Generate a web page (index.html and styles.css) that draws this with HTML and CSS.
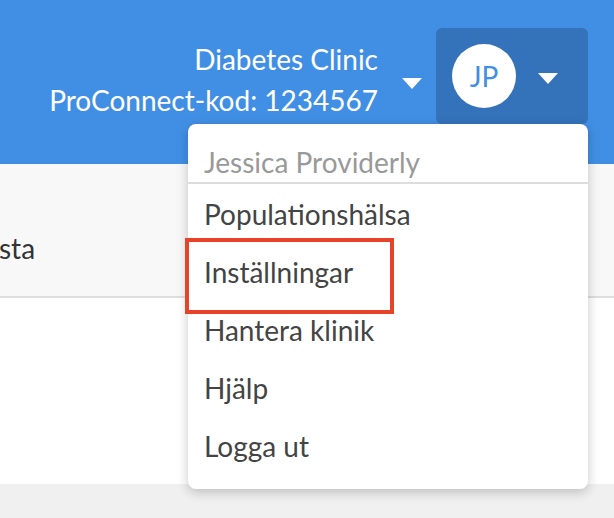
FILE: index.html
```html
<!DOCTYPE html>
<html lang="sv">
<head>
    <meta charset="UTF-8">
    <meta name="viewport" content="width=device-width, initial-scale=1.0">
    <title>ProConnect</title>
    <link rel="stylesheet" href="styles.css">
</head>
<body>

    <header class="topbar">
        <div class="clinic">
            <div class="clinic-text">
                <div>Diabetes Clinic</div>
                <div>ProConnect-kod: 1234567</div>
            </div>
            <span class="caret"></span>
        </div>
        <div class="user-button">
            <div class="avatar">JP</div>
            <span class="caret"></span>
        </div>
    </header>

    <div class="tabs">
        <span class="tab">sta</span>
    </div>
    <div class="content"></div>
    <div class="footer"></div>

    <div class="user-menu">
        <div class="user-name">Jessica Providerly</div>
        <ul class="menu-list">
            <li>Populationshälsa</li>
            <li class="highlighted">Inställningar</li>
            <li>Hantera klinik</li>
            <li>Hjälp</li>
            <li>Logga ut</li>
        </ul>
    </div>

</body>
</html>
```

FILE: styles.css
```css
body {
    margin: 0;
    font-family: 'Lato', 'Open Sans', sans-serif;
    background-color: #f0f0f0;
    color: #444;
    width: 614px;
    height: 518px;
    overflow: hidden;
    position: relative;
}
.topbar {
    height: 164px;
    box-sizing: border-box;
    background-color: #418fe5;
    display: flex;
    justify-content: flex-end;
    align-items: flex-start;
    padding: 28px 26px 0 0;
}
.clinic {
    display: flex;
    align-items: flex-start;
    color: white;
    font-size: 28px;
}
.clinic-text {
    text-align: right;
    line-height: 41px;
    padding-top: 11px;
}
.caret {
    width: 0;
    height: 0;
    border-left: 10px solid transparent;
    border-right: 10px solid transparent;
    border-top: 11px solid white;
}
.clinic .caret {
    margin: 50px 14px 0 24px;
}
.user-button {
    width: 152px;
    height: 96px;
    box-sizing: border-box;
    background-color: #3473ba;
    border-radius: 6px;
    display: flex;
    align-items: center;
    padding-left: 16px;
}
.avatar {
    width: 64px;
    height: 64px;
    border-radius: 50%;
    background: white;
    color: #418fe5;
    font-size: 28px;
    display: flex;
    align-items: center;
    justify-content: center;
}
.user-button .caret {
    margin: 4px 0 0 22px;
}
.tabs {
    height: 134px;
    box-sizing: border-box;
    background-color: #f8f8f8;
    border-bottom: 2px solid #dedede;
    padding-top: 64px;
    font-size: 28px;
    line-height: 40px;
    color: #333;
}
.tab {
    margin-left: -1px;
}
.content {
    height: 186px;
    background: white;
}
.user-menu {
    position: absolute;
    top: 124px;
    right: 26px;
    width: 400px;
    background: white;
    border-radius: 8px;
    box-shadow: 0 3px 12px rgba(0, 0, 0, 0.22);
    font-size: 28px;
    padding-bottom: 14px;
}
.user-name {
    color: #999;
    line-height: 40px;
    padding: 18px 16px 0 16px;
    border-bottom: 2px solid #ddd;
}
.menu-list {
    list-style: none;
    margin: 0;
    padding: 1px 0 0 0;
}
.menu-list li {
    line-height: 58px;
    padding-left: 16px;
    position: relative;
}
.highlighted::after {
    content: '';
    position: absolute;
    left: -3px;
    top: -5px;
    width: 201px;
    height: 68px;
    border: 4px solid #e8432a;
}
```
